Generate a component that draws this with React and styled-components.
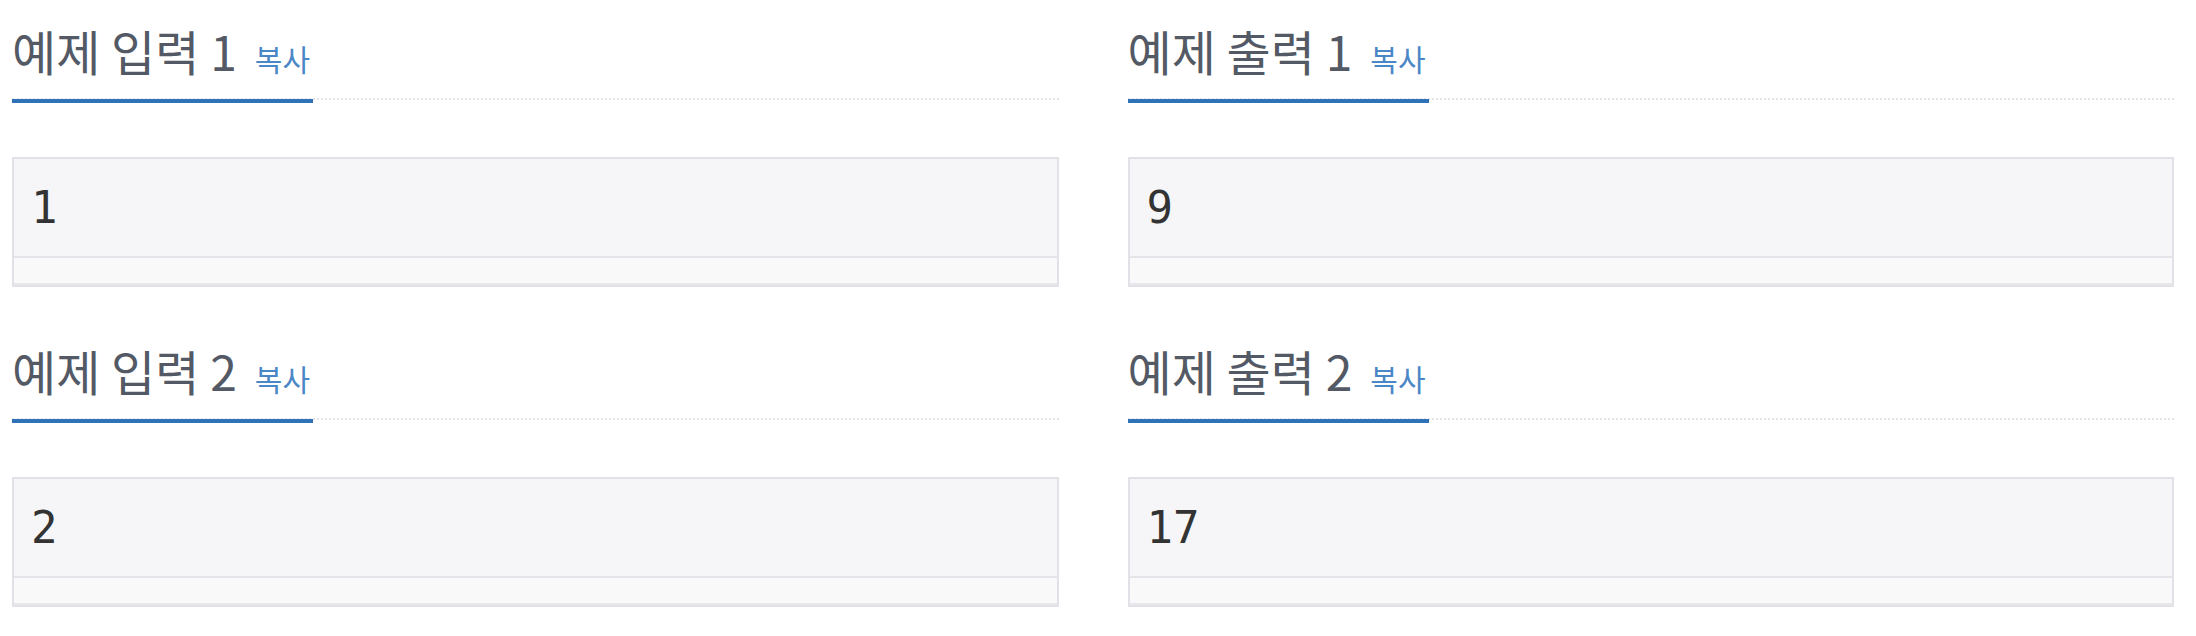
import React from "react";
import styled, { createGlobalStyle } from "styled-components";

const GlobalStyle = createGlobalStyle`
  html, body {
    margin: 0;
    padding: 0;
    background: #fff;
  }
  body {
    font-family: "Noto Sans CJK KR", "Noto Sans", sans-serif;
  }
`;

const Page = styled.div`
  display: grid;
  grid-template-columns: 1fr 1fr;
  column-gap: 69px;
  padding: 0 22px 0 12px;
`;

const Section = styled.section`
  padding-top: 22px;
  margin-bottom: 33px;
`;

const Headline = styled.div`
  display: flex;
  align-items: flex-end;
  border-bottom: 2px dotted #e3e3e9;
`;

const Title = styled.h2`
  margin: 0 0 -5px 0;
  padding: 0 3px 21px 0;
  font-size: 48px;
  line-height: 56px;
  font-weight: 400;
  color: #535a65;
  border-bottom: 4px solid #3072b7;
  white-space: pre;
`;

const CopyLink = styled.span`
  margin-left: 18px;
  font-size: 30px;
  line-height: 1;
  color: #4a87c6;
  cursor: pointer;
`;

const SampleBox = styled.div`
  margin-top: 57px;
  border: 2px solid #e1e1e8;
  background: #f6f6f8;
`;

const SampleText = styled.pre`
  margin: 0;
  padding: 16px 17px;
  font-family: "DejaVu Sans Mono", "Liberation Mono", monospace;
  font-size: 44px;
  line-height: 65px;
  color: #333;
`;

const ScrollTrack = styled.div`
  height: 25px;
  background: #f9f9fa;
  border-top: 2px solid #e5e5e9;
  border-bottom: 2px solid #e8e8ec;
`;

const samples = [
  { title: "예제 입력 1", value: "1" },
  { title: "예제 출력 1", value: "9" },
  { title: "예제 입력 2", value: "2" },
  { title: "예제 출력 2", value: "17" },
];

const App = () => (
  <>
    <GlobalStyle />
    <Page>
      {samples.map((s) => (
        <Section key={s.title}>
          <Headline>
            <Title>
              {s.title}
              <CopyLink>복사</CopyLink>
            </Title>
          </Headline>
          <SampleBox>
            <SampleText>{s.value}</SampleText>
            <ScrollTrack />
          </SampleBox>
        </Section>
      ))}
    </Page>
  </>
);

export default App;
